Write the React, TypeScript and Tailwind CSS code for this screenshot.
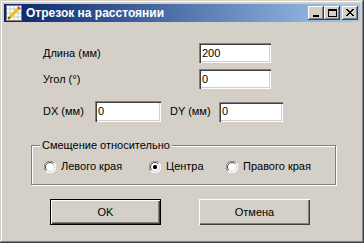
import React from 'react';

const font = { fontFamily: '"Liberation Sans", Arial, sans-serif' };

const Sunken = ({ value, w, h }: { value: string; w: string; h: string }) => (
  <div className={`${w} ${h} bg-white flex items-center pl-[3px] shadow-[inset_1px_1px_0_#808080,inset_2px_2px_0_#404040,inset_-1px_-1px_0_#ffffff,inset_-2px_-2px_0_#d4d0c8] text-[11px] text-black`}>
    {value}
  </div>
);

const Radio = ({ checked }: { checked?: boolean }) => (
  <svg width="12" height="12" viewBox="0 0 12 12" className="shrink-0">
    <circle cx="6" cy="6" r="5.5" fill="#ffffff" />
    <path d="M10.2 1.8 A5.5 5.5 0 0 0 1.8 10.2" fill="none" stroke="#808080" strokeWidth="1" />
    <path d="M9.2 2.8 A4.5 4.5 0 0 0 2.8 9.2" fill="none" stroke="#404040" strokeWidth="1" />
    <path d="M1.8 10.2 A5.5 5.5 0 0 0 10.2 1.8" fill="none" stroke="#ffffff" strokeWidth="1" />
    <path d="M2.8 9.2 A4.5 4.5 0 0 0 9.2 2.8" fill="none" stroke="#d4d0c8" strokeWidth="1" />
    {checked && <rect x="4" y="4" width="4" height="4" rx="1.5" fill="#000" />}
  </svg>
);

const TitleBtn = ({ children }: { children: React.ReactNode }) => (
  <div className="w-[16px] h-[14px] bg-[#d4d0c8] flex items-center justify-center shadow-[inset_-1px_-1px_0_#404040,inset_1px_1px_0_#ffffff,inset_-2px_-2px_0_#808080]">
    {children}
  </div>
);

const AppIcon = () => (
  <svg width="16" height="16" viewBox="0 0 16 16">
    <rect x="0.5" y="0.5" width="15" height="15" fill="#ffffff" stroke="#7f7f7f" />
    <path d="M4 1v14M8 1v14M12 1v14M1 4h14M1 8h14M1 12h14" stroke="#c8c8c8" strokeWidth="1" />
    <path d="M3 13 L13 3" stroke="#e8c020" strokeWidth="3" />
    <path d="M12 2 L14 4" stroke="#d04040" strokeWidth="2" />
    <path d="M2 14 L4 12" stroke="#404040" strokeWidth="1.5" />
  </svg>
);

const Button = ({ label, def }: { label: string; def?: boolean }) => (
  <div className={`w-[111px] h-[26px] bg-[#d4d0c8] flex items-center justify-center text-[11px] text-black ${def ? 'shadow-[inset_0_0_0_1px_#000000,inset_2px_2px_0_#ffffff,inset_-2px_-2px_0_#404040,inset_-3px_-3px_0_#808080]' : 'shadow-[inset_1px_1px_0_#ffffff,inset_-1px_-1px_0_#404040,inset_-2px_-2px_0_#808080]'}`}>
    {label}
  </div>
);

const App = () => {
  return (
    <div style={font} className="w-[364px] h-[243px] bg-[#d4d0c8] p-[4px] flex flex-col shadow-[inset_-1px_-1px_0_#404040,inset_1px_1px_0_#d4d0c8,inset_-2px_-2px_0_#808080,inset_2px_2px_0_#ffffff] overflow-hidden">
      {/* title bar */}
      <div className="h-[18px] flex items-center pl-[2px] pr-[2px] bg-gradient-to-r from-[#0a246a] to-[#a6caf0]">
        <AppIcon />
        <div className="ml-[4px] text-white font-bold text-[12px] leading-none">Отрезок на расстоянии</div>
        <div className="ml-auto flex items-center">
          <TitleBtn>
            <div className="w-[6px] h-[2px] bg-black mt-[6px] -ml-[1px]" />
          </TitleBtn>
          <TitleBtn>
            <div className="w-[9px] h-[8px] border border-black border-t-2 -mt-[1px]" />
          </TitleBtn>
          <div className="w-[2px]" />
          <TitleBtn>
            <svg width="8" height="7" viewBox="0 0 8 7" className="-mt-[1px]">
              <path d="M0 0 L7 7 M1 0 L8 7 M7 0 L0 7 M8 0 L1 7" stroke="#000" strokeWidth="1" />
            </svg>
          </TitleBtn>
        </div>
      </div>

      {/* fields */}
      <div className="flex flex-col pl-[39px] mt-[21px] text-[11px] text-black">
        <div className="flex items-center">
          <div className="w-[156px]">Длина (мм)</div>
          <Sunken value="200" w="w-[72px]" h="h-[20px]" />
        </div>
        <div className="flex items-center mt-[6px]">
          <div className="w-[156px]">Угол (°)</div>
          <Sunken value="0" w="w-[72px]" h="h-[20px]" />
        </div>
        <div className="flex items-center mt-[12px]">
          <div className="w-[52px]">DX (мм)</div>
          <Sunken value="0" w="w-[66px]" h="h-[21px]" />
          <div className="ml-[9px] w-[49px]">DY (мм)</div>
          <Sunken value="0" w="w-[64px]" h="h-[20px]" />
        </div>
      </div>

      {/* group box */}
      <div className="relative ml-[27px] mt-[23px] w-[305px] h-[40px] border border-[#808080] shadow-[inset_1px_1px_0_#ffffff,1px_1px_0_#ffffff] flex items-center pl-[12px] text-[11px] text-black">
        <div className="absolute -top-[8px] left-[8px] px-[2px] bg-[#d4d0c8] leading-[14px]">Смещение относительно</div>
        <div className="flex items-center mt-[3px]">
          <Radio />
          <div className="ml-[5px] w-[88px]">Левого края</div>
          <Radio checked />
          <div className="ml-[5px] w-[60px]">Центра</div>
          <Radio />
          <div className="ml-[5px]">Правого края</div>
        </div>
      </div>

      {/* buttons */}
      <div className="flex mt-[14px] ml-[46px] gap-[38px]">
        <Button label="OK" def />
        <Button label="Отмена" />
      </div>
    </div>
  );
};

export default App;
